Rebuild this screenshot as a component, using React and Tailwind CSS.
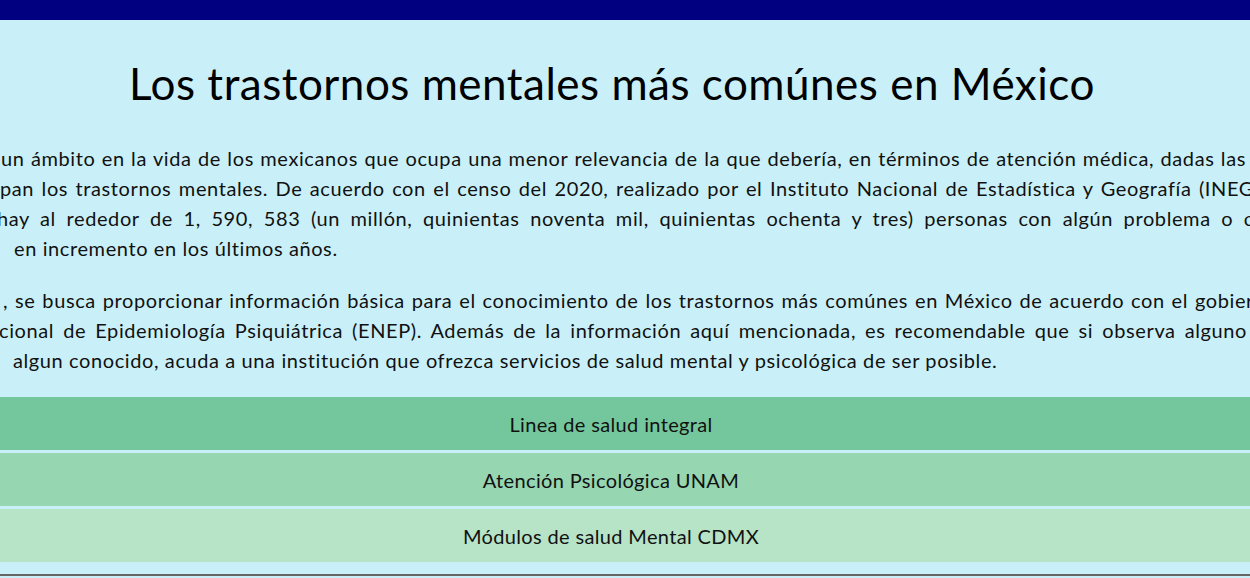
const paragraphOne = [
  {
    text: 'un ámbito en la vida de los mexicanos que ocupa una menor relevancia de la que debería, en términos de atención médica, dadas las',
    cls: 'ml-[1px] w-[1245px]',
  },
  {
    text: 'pan los trastornos mentales. De acuerdo con el censo del 2020, realizado por el Instituto Nacional de Estadística y Geografía (INEG',
    cls: 'ml-[0px] w-[1254px]',
  },
  {
    text: 'hay al rededor de 1, 590, 583 (un millón, quinientas noventa mil, quinientas ochenta y tres) personas con algún problema o c',
    cls: 'ml-[-3px] w-[1257px]',
  },
];

const paragraphTwo = [
  {
    text: ', se busca proporcionar información básica para el conocimiento de los trastornos más comúnes en México de acuerdo con el gobier',
    cls: 'ml-[3px] w-[1251px]',
  },
  {
    text: 'cional de Epidemiología Psiquiátrica (ENEP). Además de la información aquí mencionada, es recomendable que si observa alguno',
    cls: 'ml-[-1px] w-[1248px]',
  },
];

const links = [
  { label: 'Linea de salud integral', bg: 'bg-[#74c79c]' },
  { label: 'Atención Psicológica UNAM', bg: 'bg-[#96d6b0]' },
  { label: 'Módulos de salud Mental CDMX', bg: 'bg-[#b7e4c7]' },
];

// a justified line of the overflowing paragraph
const Line = ({ text, cls }) => (
  <div className={`${cls} shrink-0 whitespace-nowrap text-justify [text-align-last:justify]`}>
    {text}
  </div>
);

export default function App() {
  return (
    <div className="w-full h-[578px] overflow-hidden bg-[#c9f0f8] font-['Lato',sans-serif] text-[#111]">
      {/* top bar */}
      <div className="h-[20px] bg-[#000080]" />

      <h1 className="mt-[38px] h-[50px] text-center text-[44px] leading-[50px] tracking-[0.5px] font-normal text-black pr-[26px]">
        Los trastornos mentales más comúnes en México
      </h1>

      {/* intro */}
      <div className="mt-[35px] flex flex-col text-[20px] leading-[30px] tracking-[0.6px]">
        {paragraphOne.map((l) => (
          <Line key={l.text} {...l} />
        ))}
        <div className="pl-[14px] whitespace-nowrap">en incremento en los últimos años.</div>
      </div>

      <div className="mt-[22px] flex flex-col text-[20px] leading-[30px] tracking-[0.6px]">
        {paragraphTwo.map((l) => (
          <Line key={l.text} {...l} />
        ))}
        <div className="pl-[13px] whitespace-nowrap">
          algun conocido, acuda a una institución que ofrezca servicios de salud mental y psicológica de ser posible.
        </div>
      </div>

      {/* services */}
      <div className="mt-[22px] flex flex-col gap-[3px]">
        {links.map((l) => (
          <div
            key={l.label}
            className={`${l.bg} h-[53px] flex items-center justify-center pr-[28px] text-[20px] tracking-[0.35px] text-[#111]`}
          >
            {l.label}
          </div>
        ))}
      </div>

      <div className="mt-[12px] h-[2px] bg-[#666]" />
    </div>
  );
}
